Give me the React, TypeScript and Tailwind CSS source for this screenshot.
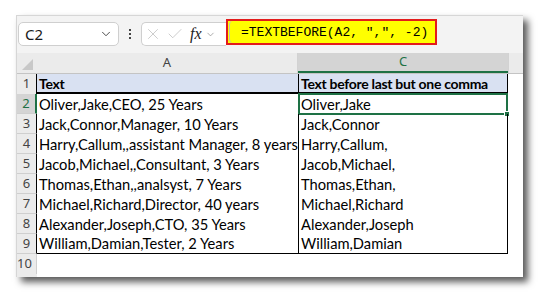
import { ChevronDown, X, Check } from 'lucide-react';

const rows = [
	['Oliver,Jake,CEO, 25 Years', 'Oliver,Jake'],
	['Jack,Connor,Manager, 10 Years', 'Jack,Connor'],
	['Harry,Callum,,assistant Manager, 8 years', 'Harry,Callum,'],
	['Jacob,Michael,,Consultant, 3 Years', 'Jacob,Michael,'],
	['Thomas,Ethan,,analsyst, 7 Years', 'Thomas,Ethan,'],
	['Michael,Richard,Director, 40 years', 'Michael,Richard'],
	['Alexander,Joseph,CTO, 35 Years', 'Alexander,Joseph'],
	['William,Damian,Tester, 2 Years', 'William,Damian'],
];

const ui = { fontFamily: '"Noto Sans", "Open Sans", sans-serif' };
const cell = { fontFamily: 'Lato, "Liberation Sans", sans-serif' };

export default function App() {
	return (
		<div className="w-[541px] h-[294px] bg-white pl-[16px] pt-[15px]">
			<div className="w-[507px] h-[262px] bg-[#f3f3f3] border-t border-l border-[#d6d6d6] shadow-[5px_5px_7px_rgba(0,0,0,0.65)] overflow-hidden">
				{/* formula bar */}
				<div className="h-[37px] flex items-start pt-[6px] pl-[1px]" style={ui}>
					<div className="w-[101px] h-[24px] bg-white border border-[#cfcfcf] rounded-[5px] flex items-center justify-between pl-[6px] pr-[5px]">
						<span className="text-[15px] text-[#1a1a1a] leading-none">C2</span>
						<ChevronDown size={14} strokeWidth={1.5} className="text-[#333]" />
					</div>
					<div className="w-[22px] h-[24px] flex flex-col items-center justify-center gap-[2px]">
						<span className="w-[2px] h-[2px] bg-[#444]" />
						<span className="w-[2px] h-[2px] bg-[#444]" />
						<span className="w-[2px] h-[2px] bg-[#444]" />
					</div>
					<div className="w-[85px] h-[24px] bg-white border border-[#cfcfcf] rounded-l-[5px] border-r-0 flex items-center pl-[2px]">
						<X size={18} strokeWidth={0.9} className="text-[#b5b5b5]" />
						<Check size={18} strokeWidth={0.9} className="text-[#b5b5b5] ml-[4px]" />
						<span className="ml-[6px] text-[16px] italic text-[#222] leading-none" style={{ fontFamily: '"Liberation Serif", serif' }}>fx</span>
						<ChevronDown size={11} strokeWidth={1.5} className="text-[#888] ml-[3px]" />
					</div>
					<div className="-mt-[3px] w-[211px] h-[26px] bg-[#ffff00] border-2 border-[#e31b1b] flex items-center">
						<div className="h-full w-[12px] border-l border-[#bdbdbd] rounded-l-[4px] ml-[1px]" />
						<span className="text-[13px] text-black leading-none whitespace-pre" style={{ fontFamily: '"Liberation Mono", monospace' }}>=TEXTBEFORE(A2, ",", -2)</span>
					</div>
				</div>
				{/* column headers */}
				<div className="h-[21px] flex bg-[#ebebeb] border-b border-[#c4c4c4]" style={ui}>
					<div className="w-[20px] h-full relative">
						<div className="absolute right-[4px] bottom-[3px] w-0 h-0 border-l-[11px] border-l-transparent border-b-[11px] border-b-[#c8c8c8]" />
					</div>
					<div className="w-[261px] flex items-center justify-center text-[13px] text-[#444] border-r border-[#d2d2d2]">A</div>
					<div className="w-[210px] flex items-center justify-center text-[13px] text-[#1e7145] bg-[#d4d4d4] border-b-2 border-[#1e7145]">C</div>
					<div className="flex-1 border-l border-[#d2d2d2]" />
				</div>
				{/* row 1 */}
				<div className="h-[20px] flex bg-white">
					<div className="w-[20px] bg-[#ebebeb] border-r border-black flex items-center justify-center text-[13px] text-[#444]" style={ui}>1</div>
					<div className="w-[261px] bg-[#d9e1f2] border-b-2 border-black flex items-center pl-[2px] text-[14px] tracking-[-0.3px] font-bold text-black" style={cell}>Text</div>
					<div className="w-[210px] bg-[#d9e1f2] border-b-2 border-x border-black flex items-center pl-[2px] text-[14px] tracking-[-0.3px] font-bold text-black whitespace-nowrap overflow-hidden" style={cell}>Text before last but one comma</div>
				</div>
				{rows.map(([a, c], i) => (
					<div key={i} className="h-[20px] flex bg-white">
						<div
							className={
								i === 0
									? 'w-[20px] bg-[#d4d4d4] border-r-2 border-[#1e7145] border-b border-b-[#cfcfcf] flex items-center justify-center text-[13px] text-[#1e7145]'
									: 'w-[20px] bg-[#ebebeb] border-r border-black border-b border-b-[#cfcfcf] flex items-center justify-center text-[13px] text-[#444]'
							}
							style={ui}
						>
							{i + 2}
						</div>
						<div className={`w-[261px] flex items-center pl-[2px] text-[14.7px] text-black whitespace-nowrap ${i === 7 ? 'border-b border-black' : ''}`} style={cell}>
							{a}
						</div>
						<div className={`w-[210px] relative flex items-center pl-[2px] text-[14.7px] text-black border-x border-black whitespace-nowrap ${i === 7 ? 'border-b' : ''}`} style={cell}>
							{c}
							{i === 0 && (
								<>
									<div className="absolute -left-[1px] -right-[1px] -top-[1px] -bottom-[1px] border-2 border-[#1e7145]" />
									<div className="absolute -right-[3px] -bottom-[3px] w-[6px] h-[6px] bg-[#1e7145] border border-white" />
								</>
							)}
						</div>
					</div>
				))}
				{/* row 10 */}
				<div className="h-[20px] flex bg-white">
					<div className="w-[20px] bg-[#ebebeb] border-r border-[#cfcfcf] flex items-center text-[13px] text-[#444]" style={ui}>10</div>
				</div>
				<div className="h-[3px] flex">
					<div className="w-[20px] bg-[#ebebeb]" />
					<div className="flex-1 bg-white" />
				</div>
			</div>
		</div>
	);
}
